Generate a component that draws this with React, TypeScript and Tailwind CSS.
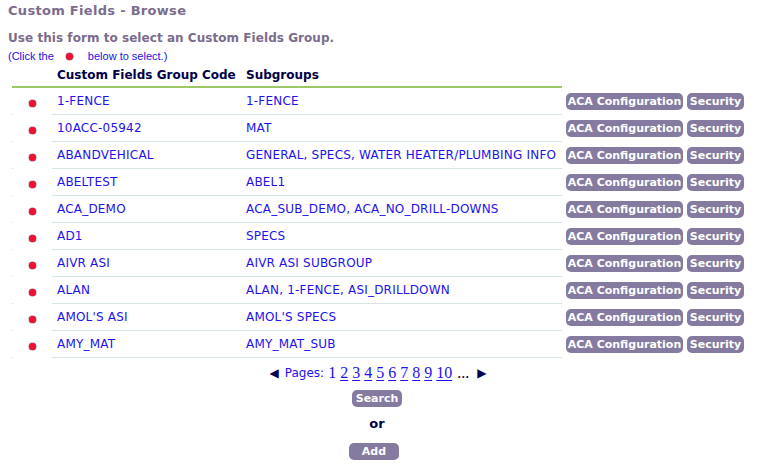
import React from "react";

const rows: [string, string][] = [
  ["1-FENCE", "1-FENCE"],
  ["10ACC-05942", "MAT"],
  ["ABANDVEHICAL", "GENERAL, SPECS, WATER HEATER/PLUMBING INFO"],
  ["ABELTEST", "ABEL1"],
  ["ACA_DEMO", "ACA_SUB_DEMO, ACA_NO_DRILL-DOWNS"],
  ["AD1", "SPECS"],
  ["AIVR ASI", "AIVR ASI SUBGROUP"],
  ["ALAN", "ALAN, 1-FENCE, ASI_DRILLDOWN"],
  ["AMOL'S ASI", "AMOL'S SPECS"],
  ["AMY_MAT", "AMY_MAT_SUB"],
];

const Dot = () => (
  <span className="inline-block w-[7px] h-[7px] rounded-full bg-[#ee1133] shadow-[0_0_0_0.5px_#9a7a8a]" />
);

const Btn = ({ children, cls = "" }: { children: React.ReactNode; cls?: string }) => (
  <span
    className={`inline-flex items-center justify-center h-[17px] rounded-[5px] bg-[#857a9f] text-white font-bold text-[11px] leading-none ${cls}`}
  >
    {children}
  </span>
);

export default function App() {
  return (
    <div
      className="w-[778px] h-[466px] bg-white overflow-hidden pl-[8px] pt-[3px]"
      style={{ fontFamily: '"DejaVu Sans", Verdana, sans-serif' }}
    >
      <div className="text-[13px] font-bold text-[#7b6c8c] leading-[16px] tracking-[0.3px]">
        Custom Fields - Browse
      </div>
      <div className="mt-[11px] text-[12px] font-bold text-[#7b6c8c] leading-[16px] tracking-[0.05px]">
        Use this form to select an Custom Fields Group.
      </div>
      <div
        className="mt-[4px] text-[11px] leading-[13px] text-[#2211dd] flex items-center"
        style={{ fontFamily: '"Liberation Sans", Arial, sans-serif' }}
      >
        <span>(Click the</span>
        <span className="ml-[12px] mr-[15px] flex items-center"><Dot /></span>
        <span>below to select.)</span>
      </div>

      <div className="ml-[4px] w-[734px]">
        {/* header */}
        <div className="flex h-[23px] items-center text-[12px] font-bold text-[#000048] whitespace-nowrap">
          <div className="w-[40px]" />
          <div className="w-[189px] pl-[5px]">Custom Fields Group Code</div>
          <div className="pl-[5px]">Subgroups</div>
        </div>
        <div className="w-[550px] h-[2px] bg-[#9cc966]" />

        {rows.map(([code, sub], i) => (
          <div key={i} className="flex h-[27px]">
            <div className="w-[40px] flex items-center justify-center relative">
              <span className="mb-[-1px]"><Dot /></span>
              <span className="absolute left-0 bottom-0 w-[1px] h-[1px] bg-[#e0dca8]" />
            </div>
            <div className="w-[510px] flex border-b border-[#d6e6e6] text-[12px] text-[#2211ee] tracking-[0.2px]">
              <div className="w-[189px] pl-[5px] flex items-center">{code}</div>
              <div className="flex-1 pl-[5px] flex items-center whitespace-nowrap">{sub}</div>
            </div>
            <div className="flex items-center pl-[4px] gap-[4px] pb-[1px]">
              <Btn cls="w-[117px]">ACA Configuration</Btn>
              <Btn cls="w-[57px]">Security</Btn>
            </div>
          </div>
        ))}

        {/* pagination */}
        <div className="flex justify-center items-center h-[30px] text-[#2211ee] pr-[2px]">
          <span className="text-[#000050] text-[12px] mr-[6px]">◀</span>
          <span className="text-[12px] mr-[4px]">Pages:</span>
          <span
            className="text-[16px] flex gap-[4px]"
            style={{ fontFamily: '"Liberation Serif", "Times New Roman", serif' }}
          >
            <span>1</span>
            {["2", "3", "4", "5", "6", "7", "8", "9", "10"].map((n) => (
              <span key={n} className="underline underline-offset-[2px]">{n}</span>
            ))}
            <span className="text-[#000030] ml-[1px]">...</span>
          </span>
          <span className="text-[#000050] text-[12px] ml-[8px]">▶</span>
        </div>

        <div className="flex justify-center mt-[2px]">
          <Btn cls="w-[50px] mr-[4px]">Search</Btn>
        </div>
        <div className="flex justify-center mt-[9px] text-[13px] font-bold text-[#000048] leading-[16px] mr-[4px]">or</div>
        <div className="flex justify-center mt-[11px]">
          <Btn cls="w-[50px] mr-[10px]">Add</Btn>
        </div>
      </div>
    </div>
  );
}
